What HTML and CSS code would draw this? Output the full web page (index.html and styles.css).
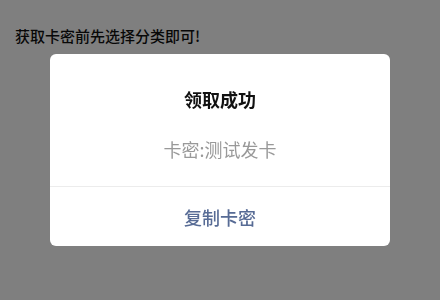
FILE: index.html
```html
<!DOCTYPE html>
<html lang="zh-CN">
<head>
<meta charset="utf-8">
<link rel="stylesheet" href="styles.css">
</head>
<body>
<div class="page">
  <p class="tip">获取卡密前先选择分类即可!</p>
</div>
<div class="mask">
  <div class="modal">
    <div class="modal-body">
      <div class="modal-title">领取成功</div>
      <div class="modal-content">卡密:测试发卡</div>
    </div>
    <div class="modal-footer">
      <div class="modal-btn">复制卡密</div>
    </div>
  </div>
</div>
</body>
</html>
```
FILE: styles.css
```css
html, body {
  margin: 0;
  padding: 0;
  width: 440px;
  height: 300px;
  overflow: hidden;
  background: #ffffff;
  font-family: "Noto Sans CJK SC", "Noto Sans", sans-serif;
}
.page {
  padding: 25px 15px 0;
}
.tip {
  margin: 0;
  font-size: 15px;
  line-height: 21px;
  font-weight: 500;
  color: #111111;
}
.mask {
  position: fixed;
  inset: 0;
  background: rgba(0, 0, 0, 0.5);
  display: flex;
  align-items: center;
  justify-content: center;
}
.modal {
  width: 340px;
  height: 192px;
  background: #ffffff;
  border-radius: 6px;
  display: flex;
  flex-direction: column;
  overflow: hidden;
}
.modal-body {
  padding: 32px 24px 24px;
  display: flex;
  flex-direction: column;
  align-items: center;
  gap: 24px;
  border-bottom: 1px solid #ececec;
}
.modal-title {
  font-size: 18px;
  line-height: 26px;
  font-weight: 700;
  color: #111111;
}
.modal-content {
  font-size: 18px;
  line-height: 26px;
  color: #999999;
}
.modal-footer {
  flex: 1;
  display: flex;
  align-items: center;
  justify-content: center;
}
.modal-btn {
  font-size: 18px;
  font-weight: 500;
  color: #576b95;
  line-height: 26px;
}
```
